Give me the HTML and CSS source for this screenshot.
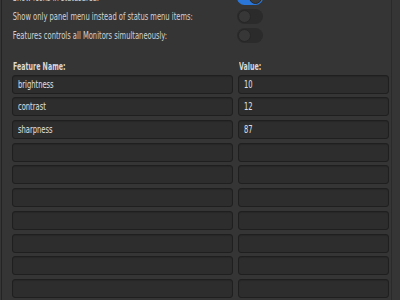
FILE: index.html
```html
<!DOCTYPE html>
<html lang="en">

<head>
    <meta charset="UTF-8">
    <title>Monitor Settings</title>
    <link rel="stylesheet" href="styles.css">
</head>

<body>
    <div class="window">
        <div class="page">
            <div class="settings">
                <div class="row">
                    <span class="txt">Show icons in statusarea:</span>
                    <div class="switch on"><div class="knob"></div></div>
                </div>
                <div class="row">
                    <span class="txt">Show only panel menu instead of status menu items:</span>
                    <div class="switch"><div class="knob"></div></div>
                </div>
                <div class="row">
                    <span class="txt">Features controls all Monitors simultaneously:</span>
                    <div class="switch"><div class="knob"></div></div>
                </div>
            </div>
            <div class="table">
                <div class="head"><span class="txt">Feature Name:</span></div>
                <div class="head"><span class="txt">Value:</span></div>
                <div class="entry"><span class="txt">brightness</span></div>
                <div class="entry"><span class="txt">10</span></div>
                <div class="entry"><span class="txt">contrast</span></div>
                <div class="entry"><span class="txt">12</span></div>
                <div class="entry"><span class="txt">sharpness</span></div>
                <div class="entry"><span class="txt">87</span></div>
                <div class="entry"></div>
                <div class="entry"></div>
                <div class="entry"></div>
                <div class="entry"></div>
                <div class="entry"></div>
                <div class="entry"></div>
                <div class="entry"></div>
                <div class="entry"></div>
                <div class="entry"></div>
                <div class="entry"></div>
                <div class="entry"></div>
                <div class="entry"></div>
                <div class="entry"></div>
                <div class="entry"></div>
            </div>
        </div>
    </div>
</body>

</html>
```

FILE: styles.css
```css
body {
    margin: 0;
    padding: 0;
    background-color: #353535;
    font-family: "Liberation Sans Narrow", "DejaVu Sans Condensed", "Noto Sans", sans-serif;
    font-size: 10px;
    color: #d2d2d2;
    overflow: hidden;
}

.window {
    width: 391px;
    height: 300px;
    margin-left: 1px;
    border-left: 1px solid #242424;
    border-right: 1px solid #2a2a2a;
    box-sizing: border-box;
    overflow: hidden;
}

.page {
    padding: 0 0 0 10px;
}

.txt {
    display: inline-block;
    white-space: nowrap;
    transform: scaleX(0.75);
    transform-origin: left center;
}

.settings {
    margin-top: -12px;
}

.row {
    height: 19px;
    display: grid;
    grid-template-columns: 225px 30px;
    align-items: center;
}

.row .txt {
    padding-left: 1px;
}

.switch {
    width: 26px;
    height: 15px;
    border-radius: 8px;
    background-color: #2b2b2b;
    box-sizing: border-box;
    position: relative;
}

.switch .knob {
    width: 13px;
    height: 13px;
    border-radius: 50%;
    background-color: #373737;
    border: 1px solid #262626;
    box-sizing: border-box;
    position: absolute;
    top: 1px;
    left: 1px;
}

.switch.on {
    background-color: #2a76d8;
}

.switch.on .knob {
    left: 12px;
    background-color: #3c3c3c;
}

.table {
    margin-top: 16px;
    display: grid;
    grid-template-columns: 221px 151px;
    column-gap: 5px;
    row-gap: 3.7px;
}

.head {
    height: 12px;
    line-height: 12px;
    font-weight: bold;
    color: #d8d8d8;
    padding-left: 1px;
    margin-bottom: -2px;
}

.head .txt {
    transform: scaleX(0.7);
}

.entry {
    height: 19px;
    line-height: 17px;
    box-sizing: border-box;
    background-color: #2d2d2d;
    border: 1px solid #1f1f1f;
    border-radius: 3px;
    padding-left: 5px;
    color: #e0e0e0;
    box-shadow: inset 0 1px 1px rgba(0, 0, 0, 0.15);
}
```
